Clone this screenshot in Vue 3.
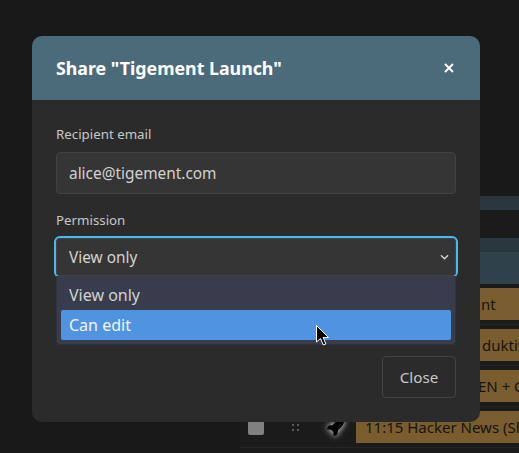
<script setup>
const rows = [
  { text: 'nt', cls: 'r1' },
  { text: 'duktiv', cls: 'r2' },
  { text: 'EN + C', cls: 'r3' },
  { text: '11:15 Hacker News (Sh', cls: 'r4' }
]
</script>

<template>
  <div class="page">
    <div class="table">
      <div class="band thin"></div>
      <div class="band thick"></div>
      <div class="rows">
        <div v-for="r in rows" :key="r.text" class="row" :class="r.cls">
          <span v-if="r.cls === 'r4'" class="check"></span>
          <span v-if="r.cls === 'r4'" class="grip">
            <i></i><i></i><i></i><i></i>
          </span>
          <svg v-if="r.cls === 'r4'" class="rocket" viewBox="0 0 24 24" width="21" height="21">
            <path d="M22 2c-6 0-10 2.500-13 7l-5 1-2 4 5 .5 2.500 2.500.5 5 4-2 1-5c4-3 7-7 7.500-13z" fill="#000" />
          </svg>
          <span class="cell">{{ r.text }}</span>
        </div>
      </div>
    </div>

    <div class="modal">
      <header class="head">
        <h2>Share "Tigement Launch"</h2>
        <svg class="x" viewBox="0 0 10 10" width="10" height="10">
          <path d="M1 1l8 8M9 1l-8 8" stroke="#fff" stroke-width="1.800" fill="none" />
        </svg>
      </header>
      <div class="body">
        <label class="lab">Recipient email</label>
        <div class="field">alice@tigement.com</div>
        <label class="lab second">Permission</label>
        <div class="field select">
          <span>View only</span>
          <svg viewBox="0 0 10 6" width="9" height="6">
            <path d="M1 1l4 4 4-4" stroke="#d8d8d8" stroke-width="1.400" fill="none" />
          </svg>
        </div>
        <div class="menu">
          <div class="opt">View only</div>
          <div class="opt hot">Can edit</div>
        </div>
        <div class="foot">
          <button class="close">Close</button>
        </div>
      </div>
    </div>

    <svg class="cursor" viewBox="0 0 13 21" width="13" height="21">
      <path d="M.5.5v16.500l4-3.500 2.800 6.500 2.600-1.100-2.800-6.400h5.400z" fill="#000" stroke="#fff" stroke-width="1" />
    </svg>
  </div>
</template>

<style scoped>
.page {
  position: relative;
  width: 519px;
  height: 453px;
  overflow: hidden;
  background: #191919;
  font-family: "Noto Sans", sans-serif;
}
.table {
  position: absolute;
  left: 240px;
  top: 196px;
  width: 279px;
  height: 257px;
  background: #1b1b1b;
}
.band.thin { height: 14px; background: #27373d; }
.band.thick {
  height: 46px;
  margin-top: 28px;
  background: linear-gradient(#27373d 0 14px, #2f4249 14px);
}
.row {
  display: flex;
  align-items: center;
  height: 41px;
  box-sizing: border-box;
  padding: 4px 0;
  border-bottom: 1px solid #252525;
}
.check {
  width: 16px;
  height: 16px;
  margin-left: 8px;
  background: #808080;
  border-radius: 2px;
}
.grip {
  display: grid;
  grid-template-columns: 2px 2px;
  gap: 3px;
  margin-left: 28px;
}
.grip i { width: 2px; height: 2px; background: #5a5a5a; }
.rocket { margin-left: 26px; filter: drop-shadow(0 0 3px #fff); }
.cell {
  margin-left: auto;
  width: 163px;
  height: 32px;
  box-sizing: border-box;
  padding-left: 9px;
  background: #7a5d2e;
  color: #17130c;
  font-size: 15px;
  line-height: 32px;
  white-space: nowrap;
  overflow: hidden;
}
.r1 .cell { padding-left: 125px; }
.r2 .cell { padding-left: 126px; }
.r3 .cell { padding-left: 122px; }
.modal {
  position: absolute;
  left: 32px;
  top: 36px;
  width: 448px;
  height: 386px;
  background: #2b2b2b;
  border-radius: 10px;
  overflow: hidden;
}
.head {
  display: flex;
  align-items: center;
  justify-content: space-between;
  height: 64px;
  padding: 0 26px 0 24px;
  background: #4c6b7a;
}
.head h2 {
  margin: 0;
  color: #fff;
  font-size: 17.8px;
  font-weight: 700;
}
.body { padding: 24px 24px 0; display: flex; flex-direction: column; }
.lab { color: #c8c8c8; font-size: 13.3px; line-height: 20px; }
.lab.second { margin-top: 16px; }
.field {
  height: 42px;
  box-sizing: border-box;
  margin-top: 8px;
  padding: 0 12px;
  display: flex;
  align-items: center;
  justify-content: space-between;
  background: #353535;
  border: 1px solid #414141;
  border-radius: 4px;
  color: #d2d2d2;
  font-size: 15.4px;
}
.select {
  height: 38px;
  padding-right: 6px;
  outline: 2px solid #4bb8ee;
  border-color: #414141;
}
.menu {
  position: relative;
  z-index: 1;
  box-sizing: border-box;
  height: 69px;
  padding: 4px 4px 4px;
  background: #383c4c;
  border: 1px solid #30333f;
  border-top: 0;
  border-radius: 0 0 4px 4px;
  color: #d2d2d2;
  font-size: 16px;
}
.opt { height: 30px; line-height: 30px; padding: 0 8px; }
.opt.hot { background: #5093e1; color: #f0f5fb; border-radius: 2px; }
.foot { display: flex; justify-content: flex-end; margin-top: 11px; }
.close {
  width: 74px;
  height: 42px;
  background: transparent;
  border: 1px solid #444;
  border-radius: 4px;
  color: #c8c8c8;
  font: 15.2px "Noto Sans", sans-serif;
}
.cursor { position: absolute; z-index: 2; left: 316px; top: 325px; }
</style>
